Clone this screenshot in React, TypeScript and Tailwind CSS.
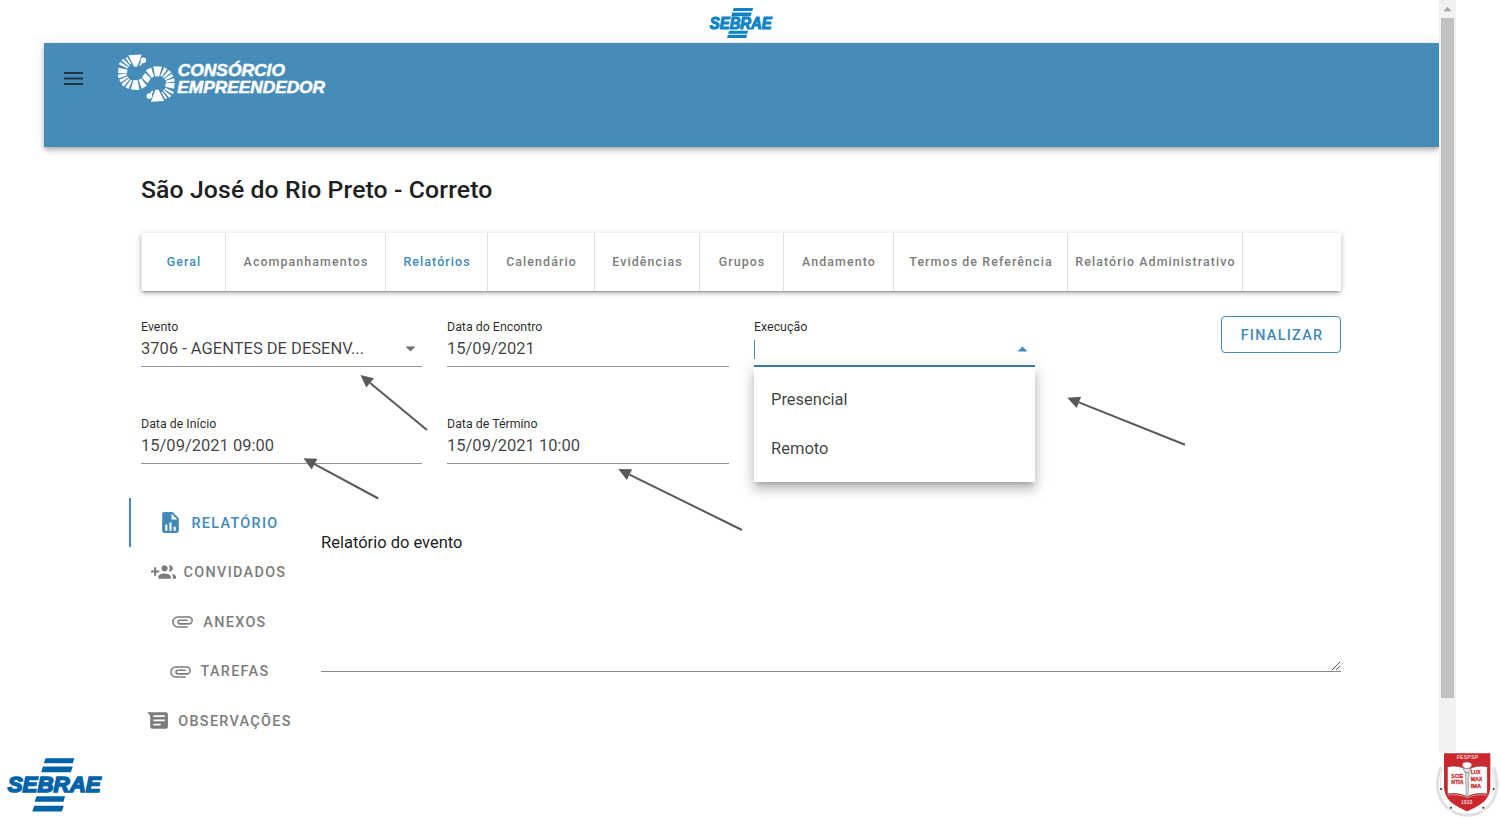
import React from "react";

const wedge = (angle: number, inner: number, outer: number, r1: number, r2: number) => {
  const point = (deg: number, r: number) => {
    const a = (deg * Math.PI) / 180;
    return `${(r * Math.cos(a)).toFixed(1)},${(r * Math.sin(a)).toFixed(1)}`;
  };
  return [
    point(angle - inner, r1),
    point(angle - outer, r2),
    point(angle + outer, r2),
    point(angle + inner, r1),
  ].join(" ");
};

const rays: [number, number, number, number, number][] = [
  [-93, 15, 21, 18, 56],
  [-123, 4, 3.5, 29, 53],
  [-137, 4, 4, 27, 56],
  [-151, 4.5, 4, 28, 57],
  [-174, 11, 9, 27, 54],
  [167, 6, 5.5, 29, 55],
  [151, 5, 5, 28, 55],
  [136, 5, 5, 28, 56],
  [120, 5.5, 5.5, 27, 55],
  [93, 15, 14, 24, 54],
  [61, 10, 10, 24, 52],
  [34, 9.5, 9.5, 25, 48],
];

function Ring() {
  return (
    <g>
      {rays.map(([a, i, o, r1, r2]) => (
        <polygon key={a} points={wedge(a, i, o, r1, r2)} />
      ))}
      <polygon points={wedge(-60, 6, 4, 24, 40)} />
      <circle cx="22" cy="-36" r="8.5" />
    </g>
  );
}

function ConsorcioLogo() {
  return (
    <svg className="h-[52px] w-[210px] overflow-visible" viewBox="0 0 630 156" fill="#fff">
      <g transform="translate(54 58)">
        <Ring />
      </g>
      <g transform="translate(116 93) rotate(180)">
        <Ring />
      </g>
      <g
        fontFamily="Liberation Sans, Arial, sans-serif"
        fontWeight="700"
        fontStyle="italic"
        fontSize="50"
        stroke="#fff"
        strokeWidth="1.5"
      >
        <text x="179" y="69" textLength="322" lengthAdjust="spacingAndGlyphs">CONSÓRCIO</text>
        <text x="178" y="121" textLength="443" lengthAdjust="spacingAndGlyphs">EMPREENDEDOR</text>
      </g>
    </svg>
  );
}

function SebraeText({ y, size }: { y: number; size: number }) {
  return (
    <text
      x="-1"
      y={y}
      fontFamily="Liberation Sans, Arial, sans-serif"
      fontWeight="700"
      fontStyle="italic"
      fontSize={size}
      textLength="280"
      lengthAdjust="spacingAndGlyphs"
      stroke="currentColor"
      strokeWidth="5"
    >
      SEBRAE
    </text>
  );
}

function SebraeLogo() {
  return (
    <svg className="mt-[6px] h-[54px] w-[93px] overflow-visible text-[#0063a7]" viewBox="0 0 280 161" fill="currentColor">
      <path d="M113 0H200L195 15H108ZM105 25H195L189 42H100ZM86 114H172L167 131H80ZM79 143H168L162 160H73Z" />
      <SebraeText y={102} size={69} />
    </svg>
  );
}

function SebraeLogoCompact() {
  return (
    <svg className="h-[31px] w-[62px] overflow-visible text-[#0b83c6]" viewBox="0 0 280 140" fill="currentColor">
      <path d="M107 0H195L191 13H103ZM100 20H189L184 37H96ZM86 103H172L168 116H82ZM81 121H168L163 136H77Z" />
      <SebraeText y={95} size={72} />
    </svg>
  );
}

function Crest() {
  return (
    <svg className="h-[66px] w-[63px]" viewBox="0 0 189 198" fontFamily="Liberation Sans, Arial, sans-serif">
      <g fill="none" stroke="#e0e0e0" strokeWidth="9">
        <path d="M15 45C-6 95 4 150 45 174" />
        <path d="M172 45C193 95 183 150 142 174" />
        <path d="M47 177Q94 203 140 177" />
        <path d="M23 48C8 84 12 112 21 130M164 48C179 84 175 112 166 130" strokeWidth="3" />
      </g>
      <path d="M24 4H163V102C163 144 134 160 93 178C53 160 24 144 24 102Z" fill="#cb272e" />
      <path d="M34 44Q66 38 94 53Q122 38 154 44V126Q119 120 94 134Q66 120 34 126Z" fill="#fff" stroke="#8c3034" strokeWidth="2" />
      <path d="M34 130Q66 124 94 137Q122 124 154 130" fill="none" stroke="#e9bcbd" strokeWidth="2" />
      <path d="M88 60H99L96 134H91Z" fill="#d4d4d4" stroke="#777" strokeWidth="1.5" />
      <path d="M81 50H106L100 61H87Z" fill="#e8e8e8" stroke="#777" strokeWidth="2" />
      <path d="M87 49C76 42 77 32 89 31C100 29 111 35 105 43C101 50 96 49 87 49Z" fill="#fff" stroke="#b7a0a0" strokeWidth="2" />
      <g fill="#c9252c" fontWeight="700" fontSize="18" stroke="#c9252c" strokeWidth=".8">
        <text x="46" y="77" textLength="35" lengthAdjust="spacingAndGlyphs">SCIE</text>
        <text x="46" y="95" textLength="37" lengthAdjust="spacingAndGlyphs">NTIA</text>
        <text x="104" y="67" textLength="30" lengthAdjust="spacingAndGlyphs">LUX</text>
        <text x="104" y="88" textLength="35" lengthAdjust="spacingAndGlyphs">MAX</text>
        <text x="104" y="107" textLength="31" lengthAdjust="spacingAndGlyphs">IMA</text>
      </g>
      <g fill="#fff" fontSize="15">
        <text x="62" y="21" textLength="64">FESPSP</text>
        <text x="75" y="156" textLength="34">1933</text>
      </g>
      <g fill="#333">
        <circle cx="15" cy="111" r="3" />
        <circle cx="173" cy="111" r="3" />
        <circle cx="45" cy="167" r="3" />
        <circle cx="142" cy="167" r="3" />
      </g>
    </svg>
  );
}

const icons = {
  chart:
    "M13,9H18.5L13,3.5V9M6,2H14L20,8V20A2,2 0 0,1 18,22H6C4.89,22 4,21.1 4,20V4C4,2.89 4.89,2 6,2M7,20H9V14H7V20M11,20H13V12H11V20M15,20H17V16H15V20Z",
  people:
    "M13 13C11 13 7 14 7 16V18H19V16C19 14 15 13 13 13M19.62 13.16C20.45 13.88 21 14.82 21 16V18H24V16C24 14.46 21.63 13.5 19.62 13.16M13 11C14.66 11 16 9.66 16 8S14.66 5 13 5 10 6.34 10 8 11.34 11 13 11M18 11C19.66 11 21 9.66 21 8S19.66 5 18 5C17.68 5 17.37 5.05 17.08 5.14C17.65 5.95 18 6.94 18 8S17.65 10.04 17.08 10.85C17.37 10.95 17.68 11 18 11M8 10H5V7H3V10H0V12H3V15H5V12H8V10Z",
  clip:
    "M7.5,18A5.5,5.5 0 0,1 2,12.5A5.5,5.5 0 0,1 7.5,7H18A4,4 0 0,1 22,11A4,4 0 0,1 18,15H9.5A2.5,2.5 0 0,1 7,12.5A2.5,2.5 0 0,1 9.5,10H17V11.5H9.5A1,1 0 0,0 8.5,12.5A1,1 0 0,0 9.5,13.5H18A2.5,2.5 0 0,0 20.5,11A2.5,2.5 0 0,0 18,8.5H7.5A4,4 0 0,0 3.5,12.5A4,4 0 0,0 7.5,16.5H17V18H7.5Z",
  notes:
    "M2 4H20A2 2 0 0 1 22 6V18A2 2 0 0 1 20 20H7A2 2 0 0 1 5 18V7.5ZM8 7V8.7H19V7ZM8 11V12.7H19V11ZM8 15V16.7H15V15Z",
};

function SideItem({ icon, label, active }: { icon: keyof typeof icons; label: string; active?: boolean }) {
  return (
    <div
      className={
        active
          ? "flex h-[49.5px] items-center justify-center border-l-2 border-[#4089b9] pt-px pr-px font-medium text-[#4089b9]"
          : "flex h-[49.5px] items-center justify-center border-l-2 border-transparent pt-px pr-px font-medium text-[#7c7c7c]"
      }
    >
      <svg className="mr-[8px] size-[25px]" viewBox="0 0 24 24" fill="currentColor" fillRule="evenodd">
        <path d={icons[icon]} />
      </svg>
      <span className="pt-[2px] text-[14.4px] tracking-[1.31px]">{label}</span>
    </div>
  );
}

function Field({ label, value, caret }: { label: string; value: string; caret?: boolean }) {
  return (
    <div className="flex h-[48px] flex-col border-b border-[#949494]">
      <span className="h-[16px] text-[12.4px] leading-[16px] text-black/85">{label}</span>
      <div className="flex h-[27px] items-center justify-between pr-[6px] text-[16.5px] text-black/75">
        <span className="pt-[2px]">{value}</span>
        {caret && (
          <svg className="h-[6px] w-[11px]" viewBox="0 0 11 6" fill="#707070">
            <path d="M0.5 .5H10.5L5.5 5.5Z" />
          </svg>
        )}
      </div>
    </div>
  );
}

const arrows = [
  [360.5, 375, 427, 430],
  [303.5, 458.2, 378.3, 498.5],
  [618.3, 469, 742, 530],
  [1067.3, 397.8, 1185, 444.7],
];

function Arrows() {
  return (
    <svg className="pointer-events-none absolute inset-0 h-[818px] w-[1500px]" viewBox="0 0 1500 818">
      {arrows.map(([x1, y1, x2, y2]) => {
        const len = Math.hypot(x2 - x1, y2 - y1);
        const ux = (x2 - x1) / len;
        const uy = (y2 - y1) / len;
        const bx = x1 + ux * 12.5;
        const by = y1 + uy * 12.5;
        return (
          <g key={x1} fill="#595959">
            <line x1={bx} y1={by} x2={x2} y2={y2} stroke="#595959" strokeWidth="2" />
            <polygon points={`${x1},${y1} ${bx - uy * 6},${by + ux * 6} ${bx + uy * 6},${by - ux * 6}`} />
          </g>
        );
      })}
    </svg>
  );
}

const tab = "flex items-center justify-center border-r border-[#e0e0e0] pl-px tracking-[1.1px] whitespace-nowrap";

export default function App() {
  return (
    <div className="relative h-[818px] w-[1500px] overflow-hidden bg-white font-['Roboto',sans-serif]">
      <div className="flex h-[752px] pl-[44px]">
        <main className="flex w-[1394.5px] flex-col">
          <div className="flex h-[43px] justify-center pt-[8px]">
            <SebraeLogoCompact />
          </div>
          <header className="flex h-[104px] bg-[#458cb9] shadow-[0_2px_4px_-1px_rgba(0,0,0,0.2),0_4px_5px_rgba(0,0,0,0.14),0_1px_10px_rgba(0,0,0,0.12)]">
            <svg className="mt-[29px] ml-[19.5px] h-[13px] w-[19px]" viewBox="0 0 19 13" stroke="#1d3444" strokeWidth="1.9">
              <path d="M0 1H19M0 6.5H19M0 12H19" />
            </svg>
            <div className="mt-[10px] ml-[35.5px]">
              <ConsorcioLogo />
            </div>
          </header>
          <div className="flex flex-col pl-[97px]">
            <h1 className="mt-[26px] h-[34px] text-[24.75px] leading-[34px] font-medium tracking-[0.12px] text-[#202020]">
              São José do Rio Preto - Correto
            </h1>
            <nav className="mt-[26px] flex h-[58px] w-[1200px] border-l border-[#e8e8e8] text-[12.4px] font-medium text-[#7c7c7c] shadow-[0_3px_2px_-2px_rgba(0,0,0,0.25),0_2px_4px_rgba(0,0,0,0.2),0_1px_8px_rgba(0,0,0,0.12)]">
              <span className={`${tab} w-[84px] text-[#4089b9]`}>Geral</span>
              <span className={`${tab} w-[160px]`}>Acompanhamentos</span>
              <span className={`${tab} w-[102px] text-[#4089b9]`}>Relatórios</span>
              <span className={`${tab} w-[107px]`}>Calendário</span>
              <span className={`${tab} w-[105px]`}>Evidências</span>
              <span className={`${tab} w-[84px]`}>Grupos</span>
              <span className={`${tab} w-[110px]`}>Andamento</span>
              <span className={`${tab} w-[174px]`}>Termos de Referência</span>
              <span className={`${tab} w-[175px]`}>Relatório Administrativo</span>
            </nav>
            <div className="mt-[25px] flex h-[181.5px] w-[1200px] justify-between">
              <div className="grid grid-cols-[281px_282px_281px] content-start gap-x-[25px] gap-y-[49px] pt-[3px]">
                <Field label="Evento" value="3706 - AGENTES DE DESENV..." caret />
                <Field label="Data do Encontro" value="15/09/2021" />
                <div className="relative flex h-[48px] flex-col border-b-2 border-[#3a80b0]">
                  <span className="h-[16px] text-[12.4px] leading-[16px] text-black/85">Execução</span>
                  <div className="flex h-[27px] items-center justify-between pr-[7px]">
                    <span className="mt-[2px] h-[19px] w-px bg-[#4089b9]" />
                    <svg className="h-[6px] w-[11px]" viewBox="0 0 11 6" fill="#4089b9">
                      <path d="M0.5 5.5H10.5L5.5 .5Z" />
                    </svg>
                  </div>
                  <div className="absolute top-[48px] left-0 flex h-[115px] w-[281px] flex-col bg-white pt-[8px] pl-[17px] text-[16.5px] text-black/75 shadow-[0_5px_5px_-3px_rgba(0,0,0,0.2),0_8px_10px_1px_rgba(0,0,0,0.14),0_3px_14px_2px_rgba(0,0,0,0.12)]">
                    <span className="flex h-[49.5px] items-center pt-px">Presencial</span>
                    <span className="flex h-[49.5px] items-center">Remoto</span>
                  </div>
                </div>
                <Field label="Data de Início" value="15/09/2021 09:00" />
                <Field label="Data de Término" value="15/09/2021 10:00" />
              </div>
              <button className="h-[37px] w-[120px] rounded-[4px] border border-[#4089b9] pt-[2px] pl-[2px] text-[14.4px] font-medium tracking-[1.29px] text-[#4089b9]">
                FINALIZAR
              </button>
            </div>
          </div>
          <div className="flex pl-[84.5px]">
            <aside className="w-[179px]">
              <SideItem icon="chart" label="RELATÓRIO" active />
              <SideItem icon="people" label="CONVIDADOS" />
              <SideItem icon="clip" label="ANEXOS" />
              <SideItem icon="clip" label="TAREFAS" />
              <SideItem icon="notes" label="OBSERVAÇÕES" />
            </aside>
            <div className="ml-[13.5px] flex h-[174.5px] w-[1020px] shrink-0 flex-col justify-between border-b border-[#8a8a8a] pt-[33px] text-[16.5px] leading-[24px] text-black/90">
              <span>Relatório do evento</span>
              <svg className="size-[10px] self-end" viewBox="0 0 10 10" stroke="#555" strokeWidth="1">
                <path d="M1 9L9 1M5 9L9 5" />
              </svg>
            </div>
          </div>
        </main>
        <div className="flex w-[17.5px] flex-col items-center bg-[#f1f1f1]">
          <svg className="h-[17.5px] w-[17px]" viewBox="0 0 17 18" fill="#a3a3a3">
            <path d="M4.5 11.5L8.5 7L12.5 11.5Z" />
          </svg>
          <div className="h-[680px] w-[13px] bg-[#c1c1c1]" />
        </div>
      </div>
      <footer className="flex h-[66px] justify-between pr-px pl-[8px]">
        <SebraeLogo />
        <Crest />
      </footer>
      <Arrows />
    </div>
  );
}
